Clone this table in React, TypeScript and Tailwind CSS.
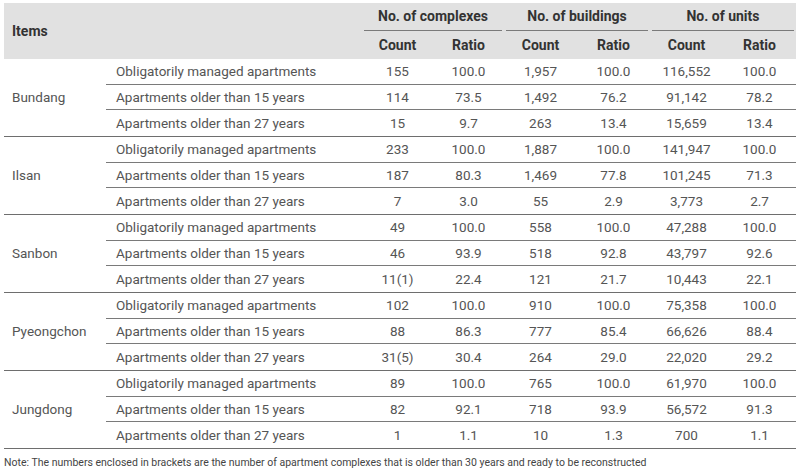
const GROUPS = [
  {
    name: "Bundang",
    rows: [
      ["155", "100.0", "1,957", "100.0", "116,552", "100.0"],
      ["114", "73.5", "1,492", "76.2", "91,142", "78.2"],
      ["15", "9.7", "263", "13.4", "15,659", "13.4"],
    ],
  },
  {
    name: "Ilsan",
    rows: [
      ["233", "100.0", "1,887", "100.0", "141,947", "100.0"],
      ["187", "80.3", "1,469", "77.8", "101,245", "71.3"],
      ["7", "3.0", "55", "2.9", "3,773", "2.7"],
    ],
  },
  {
    name: "Sanbon",
    rows: [
      ["49", "100.0", "558", "100.0", "47,288", "100.0"],
      ["46", "93.9", "518", "92.8", "43,797", "92.6"],
      ["11(1)", "22.4", "121", "21.7", "10,443", "22.1"],
    ],
  },
  {
    name: "Pyeongchon",
    rows: [
      ["102", "100.0", "910", "100.0", "75,358", "100.0"],
      ["88", "86.3", "777", "85.4", "66,626", "88.4"],
      ["31(5)", "30.4", "264", "29.0", "22,020", "29.2"],
    ],
  },
  {
    name: "Jungdong",
    rows: [
      ["89", "100.0", "765", "100.0", "61,970", "100.0"],
      ["82", "92.1", "718", "93.9", "56,572", "91.3"],
      ["1", "1.1", "10", "1.3", "700", "1.1"],
    ],
  },
];

const LABELS = [
  "Obligatorily managed apartments",
  "Apartments older than 15 years",
  "Apartments older than 27 years",
];

const GRID = "grid grid-cols-[102px_256px_71px_71px_73px_73px_73px_73px]";

export default function App() {
  return (
    <div
      className="w-[800px] h-[470px] bg-white pt-[3px] px-[4px] text-[#555]"
      style={{ fontFamily: "Roboto, 'Liberation Sans', sans-serif" }}
    >
      {/* Header */}
      <div className={`${GRID} bg-[#e1e1e1] text-[14px] font-bold text-[#333] grid-rows-[28px_28px]`}>
        <div className="row-span-2 col-span-2 flex items-center pl-[8px]">Items</div>
        {["No. of complexes", "No. of buildings", "No. of units"].map((h) => (
          <div key={h} className="col-span-2 flex items-center justify-center mx-[2px] border-b border-[#7a7a7a]">
            {h}
          </div>
        ))}
        {["Count", "Ratio", "Count", "Ratio", "Count", "Ratio"].map((h, i) => (
          <div key={i} className="flex items-center justify-center">
            {h}
          </div>
        ))}
      </div>

      {/* Body */}
      {GROUPS.map((g) => (
        <div key={g.name} className={`${GRID} grid-rows-[repeat(3,25.67px)] text-[13.5px] border-b border-[#6e6e6e]`}>
          <div className="row-span-3 flex items-center pl-[8px]">{g.name}</div>
          {g.rows.map((r, ri) => (
            <div
              key={ri}
              className={`col-span-7 grid grid-cols-subgrid ${ri < 2 ? "border-b border-[#7a7a7a]" : ""}`}
            >
              <div className="flex items-center pl-[10px]">{LABELS[ri]}</div>
              {r.map((v, vi) => (
                <div key={vi} className="flex items-center justify-center">
                  {v}
                </div>
              ))}
            </div>
          ))}
        </div>
      ))}

      <div className="pt-[6px] text-[10.5px] text-[#444]">
        Note: The numbers enclosed in brackets are the number of apartment complexes that is older than 30 years and
        ready to be reconstructed
      </div>
    </div>
  );
}
